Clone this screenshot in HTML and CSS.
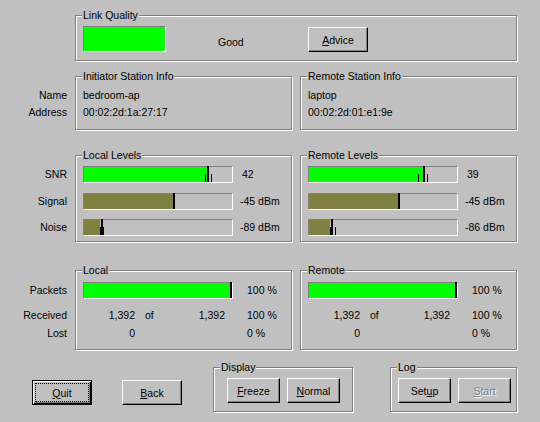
FILE: index.html
```html
<!DOCTYPE html>
<html>
<head>
<meta charset="utf-8">
<link rel="stylesheet" href="styles.css">
</head>
<body>
<div class="app">
  <section class="sec">
    <div class="frame lq">
      <div class="legend">Link Quality</div>
      <div class="lq-body">
        <div class="lq-bar"></div>
        <div class="lq-text">Good</div>
        <button class="btn lq-btn"><u>A</u>dvice</button>
      </div>
    </div>
  </section>

  <section class="sec sec-station">
    <div class="labels labels-station">
      <div>Name</div>
      <div>Address</div>
    </div>
    <div class="frame station">
      <div class="legend">Initiator Station Info</div>
      <div class="info">
        <div>bedroom-ap</div>
        <div>00:02:2d:1a:27:17</div>
      </div>
    </div>
    <div class="frame station">
      <div class="legend">Remote Station Info</div>
      <div class="info">
        <div>laptop</div>
        <div>00:02:2d:01:e1:9e</div>
      </div>
    </div>
  </section>

  <section class="sec sec-levels">
    <div class="labels labels-levels">
      <div class="lrow">SNR</div>
      <div class="lrow">Signal</div>
      <div class="lrow">Noise</div>
    </div>
    <div class="frame levels">
      <div class="legend">Local Levels</div>
      <div class="lv-rows">
        <div class="lv-row">
          <div class="bar"><div class="fill green" style="width:123px"></div><i class="mk" style="left:123px"></i><i class="pk" style="left:121px"></i><i class="pk" style="left:127px"></i></div>
          <div class="val snr">42</div>
        </div>
        <div class="lv-row">
          <div class="bar"><div class="fill olive" style="width:89px"></div><i class="mk" style="left:89px"></i></div>
          <div class="val">-45 dBm</div>
        </div>
        <div class="lv-row">
          <div class="bar"><div class="fill olive" style="width:16px"></div><i class="mk" style="left:17px"></i><i class="pk" style="left:16px"></i><i class="pk" style="left:19px"></i></div>
          <div class="val">-89 dBm</div>
        </div>
      </div>
    </div>
    <div class="frame levels">
      <div class="legend">Remote Levels</div>
      <div class="lv-rows">
        <div class="lv-row">
          <div class="bar"><div class="fill green" style="width:114px"></div><i class="mk" style="left:114px"></i><i class="pk" style="left:109px"></i><i class="pk" style="left:118px"></i></div>
          <div class="val snr">39</div>
        </div>
        <div class="lv-row">
          <div class="bar"><div class="fill olive" style="width:89px"></div><i class="mk" style="left:89px"></i></div>
          <div class="val">-45 dBm</div>
        </div>
        <div class="lv-row">
          <div class="bar"><div class="fill olive" style="width:21px"></div><i class="mk" style="left:22px"></i><i class="pk" style="left:21px"></i><i class="pk" style="left:26px"></i></div>
          <div class="val">-86 dBm</div>
        </div>
      </div>
    </div>
  </section>

  <section class="sec sec-packets">
    <div class="labels labels-packets">
      <div class="l-pk">Packets</div>
      <div class="l-rc">Received</div>
      <div class="l-ls">Lost</div>
    </div>
    <div class="frame packets">
      <div class="legend">Local</div>
      <div class="pk-row">
        <div class="bar"><div class="fill green" style="width:148px"></div><i class="mk" style="left:146px"></i></div>
        <div class="pct">100 %</div>
      </div>
      <div class="counts">
        <div class="n1">1,392</div><div>of</div><div class="n2">1,392</div><div class="p">100 %</div>
        <div class="n1">0</div><div></div><div></div><div class="p">0 %</div>
      </div>
    </div>
    <div class="frame packets">
      <div class="legend">Remote</div>
      <div class="pk-row">
        <div class="bar"><div class="fill green" style="width:148px"></div><i class="mk" style="left:146px"></i></div>
        <div class="pct">100 %</div>
      </div>
      <div class="counts">
        <div class="n1">1,392</div><div>of</div><div class="n2">1,392</div><div class="p">100 %</div>
        <div class="n1">0</div><div></div><div></div><div class="p">0 %</div>
      </div>
    </div>
  </section>

  <section class="bottom">
    <button class="btn quit"><u>Q</u>uit</button>
    <button class="btn back"><u>B</u>ack</button>
    <div class="frame disp">
      <div class="legend">Display</div>
      <div class="btnrow">
        <button class="btn sm"><u>F</u>reeze</button>
        <button class="btn sm"><u>N</u>ormal</button>
      </div>
    </div>
    <div class="frame log">
      <div class="legend">Log</div>
      <div class="btnrow">
        <button class="btn sm">Set<u>u</u>p</button>
        <button class="btn sm disabled"><u>S</u>tart</button>
      </div>
    </div>
  </section>
</div>
</body>
</html>
```

FILE: styles.css
```css
* { box-sizing: border-box; }
html, body { margin: 0; padding: 0; }
body {
  background: #c0c0c0;
  font-family: "Liberation Sans", Arial, sans-serif;
  font-size: 10.5px;
  color: #000;
}
.app { width: 540px; height: 422px; padding-top: 15px; overflow: hidden; }

.sec {
  display: grid;
  grid-template-columns: 67px 217px 217px;
  column-gap: 8px;
  align-items: start;
}
.sec-station { margin-top: 15px; }
.sec-levels { margin-top: 25px; }
.sec-packets { margin-top: 28px; }

.frame {
  border: 1px solid #808080;
  box-shadow: inset 1px 1px #fff, 1px 1px #fff;
  padding: 0 7px;
}
.legend {
  width: max-content;
  margin: -7px 0 0 -1px;
  padding: 0 1px;
  line-height: 13px;
  background: #c0c0c0;
  white-space: nowrap;
}

/* link quality */
.lq { grid-column: 2 / 4; height: 46px; }
.lq-body { display: flex; align-items: flex-start; margin-top: 4px; }
.lq-bar {
  width: 83px; height: 26px; flex: none;
  background: #00ff00;
  border: 1px solid; border-color: #808080 #fff #fff #808080;
}
.lq-text { width: 90px; margin: 10px 0 0 52px; line-height: 12px; }
.lq-btn { margin-top: 1px; }

/* buttons */
.btn {
  width: 60px; height: 25px; padding: 0; flex: none;
  font: inherit; line-height: 12px; color: #000;
  background: #c0c0c0;
  border: 1px solid; border-color: #fff #000 #000 #fff;
  box-shadow: inset -1px -1px #808080;
  border-radius: 0;
}
.btn u { text-decoration: underline; }
.sm { width: 53px; }
.disabled { color: #808080; text-shadow: 1px 1px #fff; }

/* labels column */
.labels { text-align: right; white-space: nowrap; }
.labels-station { padding-top: 11px; line-height: 17px; }
.labels-levels { padding-top: 11px; }
.lrow { line-height: 17px; }
.lrow:nth-child(2) { margin-top: 10px; }
.lrow:nth-child(3) { margin-top: 9px; }
.labels-packets { padding-top: 12px; }
.l-pk { line-height: 17px; }
.l-rc { margin-top: 7px; line-height: 18px; }
.l-ls { line-height: 18px; }

/* station */
.station { height: 54px; }
.info { margin-top: 4px; line-height: 17px; white-space: nowrap; }

/* levels */
.levels { height: 87px; }
.lv-rows { margin-top: 4px; }
.lv-row { display: flex; align-items: center; height: 17px; }
.lv-row:nth-child(2) { margin-top: 10px; }
.lv-row:nth-child(3) { margin-top: 9px; }
.bar {
  position: relative;
  width: 150px; height: 17px; flex: none;
  background: #c0c0c0;
  border: 1px solid; border-color: #808080 #fff #fff #808080;
}
.fill { height: 100%; }
.green { background: #00ff00; }
.olive { background: #808040; }
.mk { position: absolute; top: -1px; bottom: 0; width: 2px; background: #000; }
.pk { position: absolute; bottom: 0; height: 8px; width: 1px; background: #000; }
.val { margin-left: 7px; line-height: 17px; white-space: nowrap; }
.val.snr { margin-left: 9px; }

/* packets */
.packets { height: 80px; }
.pk-row { display: flex; align-items: center; margin-top: 5px; }
.pct { margin-left: 14px; line-height: 17px; white-space: nowrap; }
.counts {
  display: grid;
  grid-template-columns: 62px 20px 60px auto;
  margin-top: 7px;
  line-height: 18px;
  white-space: nowrap;
}
.counts .n1 { text-align: right; padding-right: 10px; }
.counts .n2 { text-align: right; }
.counts .p { padding-left: 22px; }

/* bottom */
.bottom { display: flex; align-items: flex-start; margin-top: 17px; }
.quit {
  margin: 13px 0 0 32px;
  border: 1px solid #000;
  box-shadow: inset 1px 1px #fff, inset -1px -1px #000, inset -2px -2px #808080;
  outline: 1px dotted #000;
  outline-offset: -4px;
}
.back { margin: 13px 0 0 30px; }
.disp { margin-left: 31px; width: 140px; height: 45px; }
.log { margin-left: 37px; width: 127px; height: 45px; }
.btnrow { display: flex; gap: 7px; margin-top: 4px; }
.disp .btnrow { margin-left: 6px; }
```
